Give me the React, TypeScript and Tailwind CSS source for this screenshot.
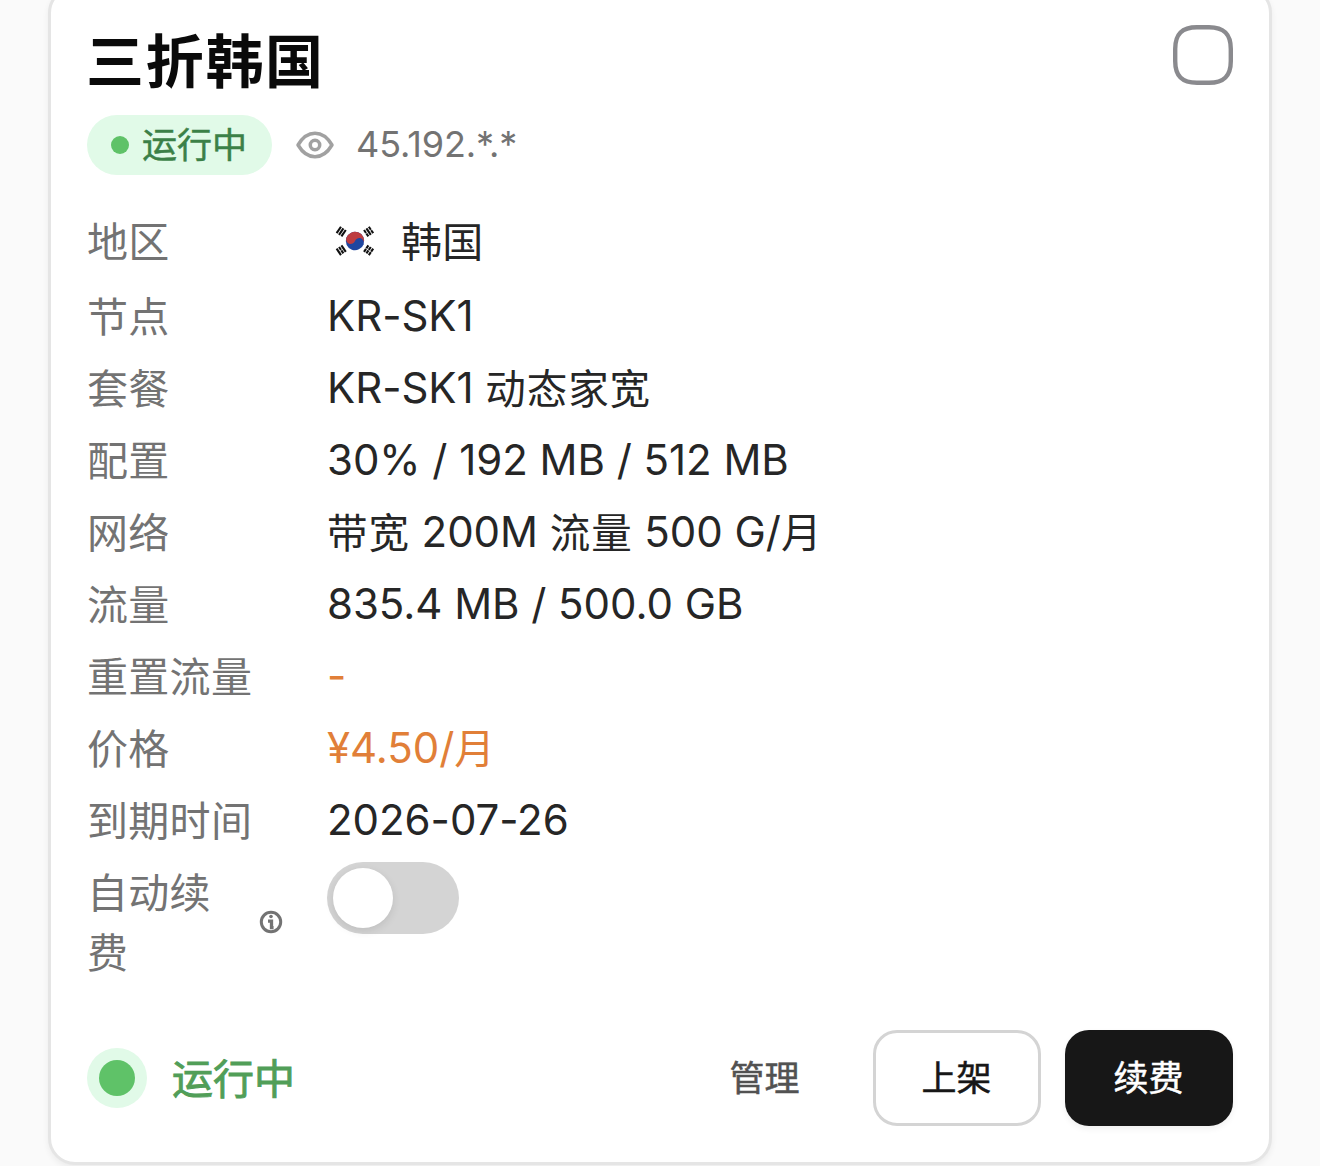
import { useState } from "react";
import type { ReactNode } from "react";
import clsx from "clsx";

interface DetailItem {
  label: string;
  value: string;
  highlight?: boolean;
}

const details: DetailItem[] = [
  { label: "节点", value: "KR-SK1" },
  { label: "套餐", value: "KR-SK1 动态家宽" },
  { label: "配置", value: "30% / 192 MB / 512 MB" },
  { label: "网络", value: "带宽 200M 流量 500 G/月" },
  { label: "流量", value: "835.4 MB / 500.0 GB" },
  { label: "重置流量", value: "-", highlight: true },
  { label: "价格", value: "¥4.50/月", highlight: true },
  { label: "到期时间", value: "2026-07-26" },
];

function EyeIcon() {
  return (
    <svg
      className="h-[42px] w-[42px] text-[#a1a1a1]"
      viewBox="0 0 24 24"
      fill="none"
      stroke="currentColor"
      strokeWidth="2"
      strokeLinecap="round"
      strokeLinejoin="round"
    >
      <path d="M2.300 12C4.700 7.900 8 5.300 12 5.300s7.300 2.600 9.700 6.700c-2.400 4.100-5.700 6.700-9.700 6.700S4.700 16.100 2.300 12Z" />
      <circle cx="12" cy="12" r="2.700" />
    </svg>
  );
}

function InfoIcon() {
  return (
    <svg
      className="h-6 w-6"
      viewBox="0 0 24 24"
      fill="none"
      stroke="currentColor"
      strokeWidth="3"
    >
      <circle cx="12" cy="12" r="9.700" />
      <path d="M9 11.200h3.500v8" strokeWidth="3.300" />
      <circle cx="12" cy="6.500" r="1.800" fill="currentColor" stroke="none" />
      <path d="M11.500 17.500h3" />
    </svg>
  );
}

function Trigram({ x, y, angle, broken }: { x: number; y: number; angle: number; broken: number[] }) {
  return (
    <g transform={`translate(${x} ${y}) rotate(${angle})`}>
      {[-2.9, 0, 2.9].map((dy, i) => (
        <path
          key={dy}
          d={broken.includes(i) ? `M-3.900 ${dy}h3.600M.3 ${dy}h3.600` : `M-3.900 ${dy}h7.800`}
          stroke="#111"
          strokeWidth="2.100"
        />
      ))}
    </g>
  );
}

function KoreaFlag() {
  return (
    <svg className="mb-0.5 h-[42px] w-[56px]" viewBox="0 0 56 42">
      <g transform="translate(28 21)">
        <g transform="rotate(20)">
          <circle r="9.200" fill="#1f46a0" />
          <path
            d="M-9.200 0a9.200 9.200 0 0 1 18.400 0a4.600 4.600 0 0 0-9.200 0a4.600 4.600 0 0 1-9.200 0"
            fill="#bd3c40"
          />
        </g>
        <Trigram x={-13.8} y={-9.4} angle={-56} broken={[]} />
        <Trigram x={13.6} y={-9.4} angle={56} broken={[0, 2]} />
        <Trigram x={-13.8} y={9.2} angle={56} broken={[1]} />
        <Trigram x={13.6} y={9.2} angle={-56} broken={[0, 1, 2]} />
      </g>
    </svg>
  );
}

// Chinese runs are set slightly smaller than the Latin text around them
function MixedText({ text }: { text: string }) {
  return text.split(/([\u4e00-\u9fff]+)/).map((part, i) =>
    i % 2 ? (
      <span key={i} className="relative top-px text-[40.5px] tracking-[0.9px]">
        {part}
      </span>
    ) : (
      part
    )
  );
}

function DetailRow({ label, children }: { label: string; children: ReactNode }) {
  return (
    <div className="flex items-center">
      <div className="w-[240px] shrink-0 text-[#737373]">{label}</div>
      {children}
    </div>
  );
}

export default function App() {
  const [checked, setChecked] = useState(false);
  const [autoRenew, setAutoRenew] = useState(false);

  return (
    <div className="h-[1166px] w-[1320px] overflow-hidden bg-[#fafafa] px-12 font-['Inter','Noto_Sans_CJK_SC',sans-serif]">
      <div className="-mt-[14px] flex h-[1179px] flex-col rounded-[27px] border-[3px] border-[#e5e5e5] bg-white px-9 pb-9 pt-[37px] shadow-[0_3px_6px_rgba(0,0,0,0.06)]">
        {/* Header */}
        <div className="flex items-start justify-between">
          <h3 className="-ml-px pb-px pt-px text-[58px] font-bold leading-[70px] tracking-[1.7px] text-[#0a0a0a]">
            三折韩国
          </h3>
          <button
            onClick={() => setChecked(!checked)}
            className="-mt-px text-[#8a8a8e]"
            aria-label="选择"
          >
            <svg className="h-[60px] w-[60px]" viewBox="0 0 60 60">
              <path
                d="M24 2.200H36C51 2.200 57.800 9 57.800 24V36C57.800 51 51 57.800 36 57.800H24C9 57.800 2.200 51 2.200 36V24C2.200 9 9 2.200 24 2.200Z"
                fill={checked ? "#171717" : "#fff"}
                stroke="currentColor"
                strokeWidth="4.400"
              />
            </svg>
          </button>
        </div>

        {/* Status */}
        <div className="mt-[17px] flex items-center">
          <span className="flex h-[60px] w-[185px] items-center gap-[13px] rounded-full bg-[#e1fae8] pl-6 text-[35px] leading-[60px] text-[#3b8047] [-webkit-text-stroke:0.5px_#3b8047]">
            <span className="h-[18px] w-[18px] rounded-full bg-[#5fc268]" />
            运行中
          </span>
          <span className="ml-[22px]">
            <EyeIcon />
          </span>
          <span className="ml-5 pb-0.5 text-[36px] leading-[58px] tracking-[-0.1px] text-[#737373]">
            45.192.*.*
          </span>
        </div>

        {/* Details */}
        <div className="mt-9 flex flex-col gap-3 text-[41px] leading-[60px] tracking-[0.3px] text-[#262626]">
          <div className="h-[64px] pt-px">
            <DetailRow label="地区">
              <KoreaFlag />
              <span className="ml-[18px]">韩国</span>
            </DetailRow>
          </div>
          {details.map((item) => (
            <DetailRow key={item.label} label={item.label}>
              <span
                className={clsx(
                  "-mt-0.5 h-[60px] text-[42px] tracking-[-0.04px]",
                  item.highlight && "text-[#e17f38]"
                )}
              >
                <MixedText text={item.value} />
              </span>
            </DetailRow>
          ))}
          <div className="flex items-start">
            <div className="flex w-[240px] shrink-0 items-center text-[#737373]">
              <span className="w-[160px]">自动续费</span>
              <span className="mb-0.5 ml-3">
                <InfoIcon />
              </span>
            </div>
            <button
              onClick={() => setAutoRenew(!autoRenew)}
              className={clsx(
                "-mt-px flex h-[72px] w-[132px] items-center rounded-full px-1.5",
                autoRenew ? "justify-end bg-[#171717]" : "bg-[#d4d4d4]"
              )}
              aria-label="自动续费"
            >
              <span className="h-[60px] w-[60px] rounded-full bg-white shadow-[0_3px_9px_rgba(0,0,0,0.1)]" />
            </button>
          </div>
        </div>

        {/* Footer */}
        <div className="mt-auto flex items-center text-[35px]">
          <span className="flex h-[60px] w-[60px] items-center justify-center rounded-full bg-[#e1fae8]">
            <span className="h-9 w-9 rounded-full bg-[#5fc268]" />
          </span>
          <span className="ml-[25px] pt-0.5 text-[41px] leading-[58px] text-[#519e58] [-webkit-text-stroke:0.9px_#519e58]">
            运行中
          </span>
          <div className="ml-auto flex gap-6">
            <button className="h-24 w-[168px] pr-px text-[#525252] [-webkit-text-stroke:0.5px_#525252]">
              管理
            </button>
            <button className="h-24 w-[168px] rounded-[24px] border-[3px] border-[#d4d4d4] pr-px text-[#171717] [-webkit-text-stroke:0.5px_#171717]">
              上架
            </button>
            <button className="h-24 w-[168px] rounded-[24px] bg-[#171717] pr-px text-white shadow-[0_3px_6px_rgba(0,0,0,0.06)] [-webkit-text-stroke:0.5px_#fff]">
              续费
            </button>
          </div>
        </div>
      </div>
    </div>
  );
}
